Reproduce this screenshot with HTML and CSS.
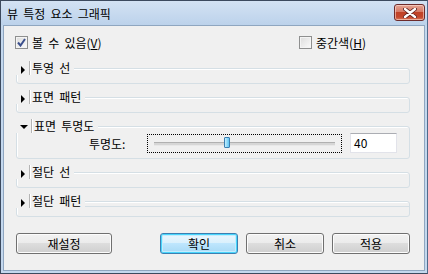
FILE: index.html
```html
<!DOCTYPE html>
<html>
<head>
    <title>뷰 특정 요소 그래픽</title>
    <link rel="stylesheet" href="styles.css">
</head>
<body>
    <div class="window">
        <div class="titlebar">
            <span class="title">뷰 특정 요소 그래픽</span>
            <div class="close-btn">
                <svg width="14" height="10" viewBox="0 0 14 10">
                    <path d="M2 1 L12 9 M12 1 L2 9" stroke="#5a2020" stroke-width="4" stroke-linecap="round"/>
                    <path d="M2 1 L12 9 M12 1 L2 9" stroke="#ffffff" stroke-width="2.4" stroke-linecap="round"/>
                </svg>
            </div>
        </div>
        <div class="client">
            <div class="check-row">
                <label class="check">
                    <span class="box checked">
                        <svg width="9" height="9" viewBox="0 0 9 9"><path d="M1 4.5 L3.5 7.5 L8 1" fill="none" stroke="#3b4f8c" stroke-width="2"/></svg>
                    </span>
                    <span>볼 수 있음(<u>V</u>)</span>
                </label>
                <label class="check">
                    <span class="box"></span>
                    <span>중간색(<u>H</u>)</span>
                </label>
            </div>

            <div class="group g-small">
                <div class="group-head"><span class="arrow right"></span><span class="sep"></span><span>투영 선</span></div>
            </div>
            <div class="group g-small">
                <div class="group-head"><span class="arrow right"></span><span class="sep"></span><span>표면 패턴</span></div>
            </div>
            <div class="group g-open">
                <div class="group-head"><span class="arrow down"></span><span class="sep"></span><span>표면 투명도</span></div>
                <div class="opacity-row">
                    <span class="field-label">투명도:</span>
                    <div class="slider">
                        <div class="track"></div>
                        <div class="thumb" style="left: 40%"></div>
                    </div>
                    <div class="edit">40</div>
                </div>
            </div>
            <div class="group g-small">
                <div class="group-head"><span class="arrow right"></span><span class="sep"></span><span>절단 선</span></div>
            </div>
            <div class="group g-small g-last">
                <div class="group-head"><span class="arrow right"></span><span class="sep"></span><span>절단 패턴</span></div>
                <div class="inner-line"></div>
            </div>

            <div class="buttons">
                <button class="btn">재설정</button>
                <div class="spacer"></div>
                <button class="btn default">확인</button>
                <button class="btn">취소</button>
                <button class="btn">적용</button>
            </div>
        </div>
    </div>
</body>
</html>
```

FILE: styles.css
```css
body {
    margin: 0;
    font-family: "Noto Sans CJK KR", "Noto Sans", sans-serif;
    font-size: 12px;
    word-spacing: 2.5px;
    color: #000;
    background: #fff;
}
.window {
    width: 428px;
    height: 274px;
    box-sizing: border-box;
    border: 1px solid #3c4a5e;
    border-right-color: #4f6b8c;
    background: #c4d8ee;
    display: flex;
    flex-direction: column;
}
.titlebar {
    height: 24px;
    display: flex;
    align-items: center;
    padding: 0 2px 0 6px;
    background: linear-gradient(#d3e2f3, #bcd2eb);
}
.title {
    flex: 1;
    color: #000;
    line-height: 12px;
    margin-top: 2px;
}
.close-btn {
    width: 29px;
    height: 15px;
    margin-top: -1px;
    border: 1px solid #6d2b2b;
    border-radius: 3px;
    background: linear-gradient(#e5a494 0%, #d67a66 45%, #c04227 50%, #c4472d 80%, #d8775a 100%);
    box-shadow: inset 0 0 0 1px rgba(255, 230, 220, 0.55);
    display: flex;
    align-items: center;
    justify-content: center;
}
.client {
    flex: 1;
    margin: 0 2px 2px 2px;
    border: 1px solid #8fa6c0;
    background: #f0f0f0;
    padding: 10px 14px 0 11px;
}
.check-row {
    display: flex;
    justify-content: space-between;
    height: 13px;
    padding-right: 44px;
}
.check {
    display: flex;
    align-items: center;
    gap: 4px;
    line-height: 13px;
}
.box {
    width: 11px;
    height: 11px;
    border: 1px solid #8e8f8f;
    background: linear-gradient(135deg, #dcdcdc, #fbfbfb);
    box-shadow: inset 0 0 0 1px #f4f4f4;
    display: flex;
    align-items: center;
    justify-content: center;
}
.group {
    position: relative;
    margin-left: 1px;
    border: 1px solid #d5dfe5;
    border-radius: 3px;
    box-shadow: inset 1px 1px 0 #fff;
}
.check-row + .group {
    margin-top: 19px;
}
.group + .group {
    margin-top: 13px;
}
.g-small {
    height: 14px;
}
.g-open {
    height: 31px;
}
.group-head {
    position: absolute;
    top: -8px;
    left: -1px;
    height: 14px;
    padding: 0 4px 0 4px;
    background: #f0f0f0;
    display: flex;
    align-items: center;
    line-height: 14px;
}
.arrow {
    width: 0;
    height: 0;
    margin-top: 3px;
}
.arrow.right {
    margin-left: 1px;
    border-top: 4px solid transparent;
    border-bottom: 4px solid transparent;
    border-left: 4px solid #000;
}
.arrow.down {
    margin-top: 2px;
    border-left: 4px solid transparent;
    border-right: 4px solid transparent;
    border-top: 4px solid #000;
}
.sep {
    width: 1px;
    height: 14px;
    margin: 0 2px 0 4px;
    background: #b4b4b4;
    box-shadow: 1px 0 0 #fff;
}
.right + .sep {
    margin-left: 4px;
}
.down + .sep {
    margin-left: 3px;
}
.inner-line {
    margin-top: 4px;
    border-top: 1px solid #d5dfe5;
}
.opacity-row {
    display: flex;
    align-items: center;
    padding: 6px 0 0 72px;
}
.field-label {
    width: 41px;
}
.slider {
    position: relative;
    width: 181px;
    height: 17px;
    margin-left: 17px;
    padding: 0 6px;
    border: 1px dotted #000;
}
.track {
    margin-top: 7px;
    height: 2px;
    border-top: 1px solid #b0b0b0;
    border-bottom: 1px solid #e8e8e8;
    background: #d6d6d6;
}
.thumb {
    position: absolute;
    top: 2px;
    width: 4px;
    height: 9px;
    margin-left: -1px;
    border: 1px solid #3c7fb1;
    border-radius: 1px;
    background: linear-gradient(90deg, #c6eefd, #5fc7f5);
}
.edit {
    width: 42px;
    height: 18px;
    margin-left: 8px;
    padding-left: 3px;
    border: 1px solid #e2e3ea;
    border-top-color: #abadb3;
    background: #fff;
    line-height: 18px;
}
.buttons {
    display: flex;
    gap: 8px;
    margin-top: 16px;
    margin-left: 1px;
}
.spacer {
    width: 32px;
}
.btn {
    font-family: inherit;
    font-size: 12px;
    width: 78px;
    height: 21px;
    padding: 0;
    border: 1px solid #707070;
    border-radius: 3px;
    background: linear-gradient(#f2f2f2 0%, #ebebeb 50%, #dddddd 50%, #cfcfcf 100%);
    box-shadow: inset 0 0 0 1px #fcfcfc;
    color: #000;
}
.btn:first-child {
    width: 96px;
}
.btn.default {
    border-color: #3c7fb1;
    background: linear-gradient(#eaf6fd 0%, #d9f0fc 50%, #bee6fd 50%, #a7d9f5 100%);
    box-shadow: inset 0 0 0 1px #48d5fc, inset 0 0 0 2px #c3ecfd;
}
```
